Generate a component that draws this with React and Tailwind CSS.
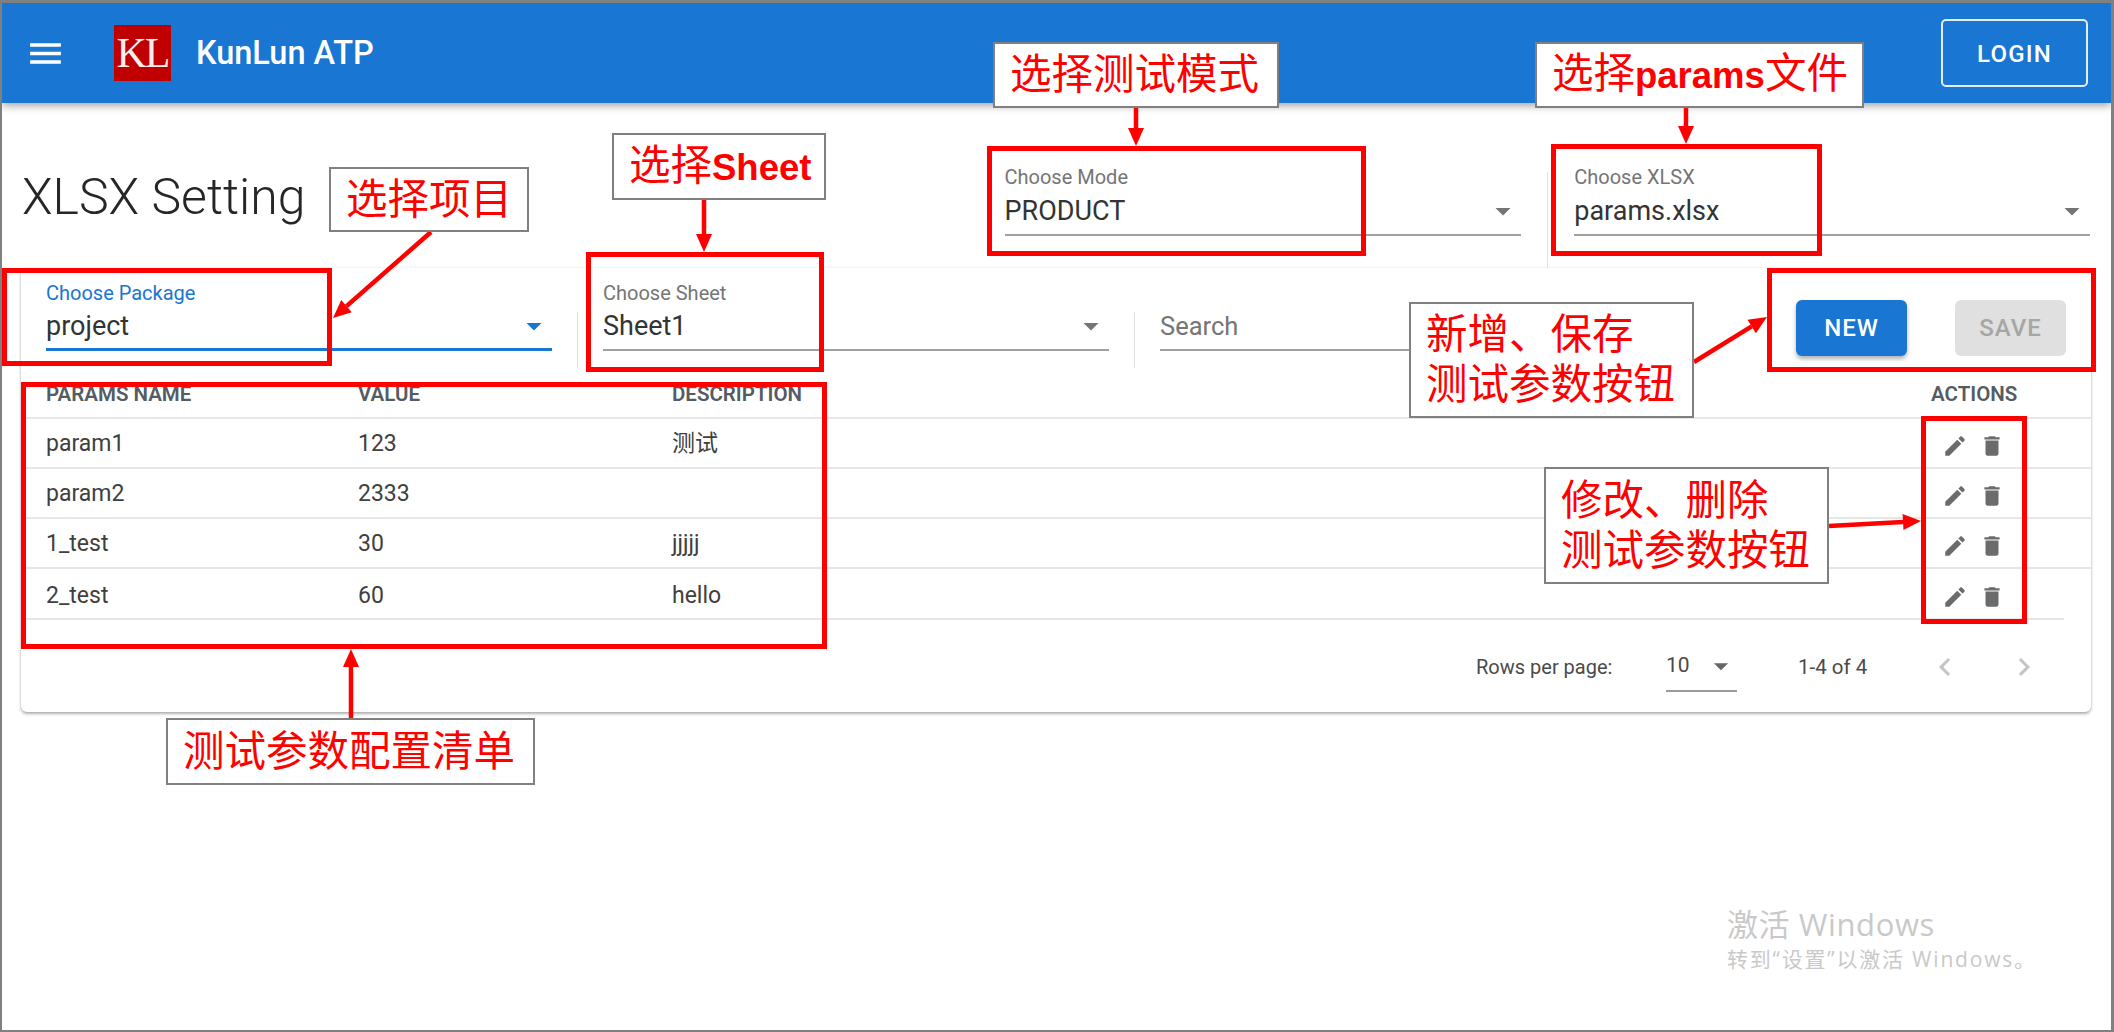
import React from "react";

const sans = "font-['Roboto','Noto_Sans_CJK_SC',sans-serif]";

const Icon = ({ d, className }) => (
  <svg viewBox="0 0 24 24" fill="currentColor" className={className}>
    <path d={d} />
  </svg>
);

const MENU = "M3 18h18v-2H3v2zm0-5h18v-2H3v2zm0-7v2h18V6H3z";
const DROP = "M7 10l5 5 5-5z";
const EDIT =
  "M3 17.25V21h3.75L17.81 9.94l-3.75-3.75L3 17.25zM20.71 7.04c.39-.39.39-1.02 0-1.41l-2.34-2.34c-.39-.39-1.02-.39-1.41 0l-1.83 1.83 3.75 3.75 1.83-1.83z";
const TRASH =
  "M6 19c0 1.1.9 2 2 2h8c1.1 0 2-.9 2-2V7H6v12zM19 4h-3.5l-1-1h-5l-1 1H5v2h14V4z";
const LEFT = "M15.41 7.41 14 6l-6 6 6 6 1.41-1.41L10.83 12z";
const RIGHT = "M10 6 8.59 7.41 13.17 12l-4.58 4.58L10 18l6-6z";

function Select({ label, value, focused, raised, className }) {
  return (
    <div className={className}>
      <div
        className={`text-[20px] leading-[20px] ${raised ? "-mt-[2px]" : ""} ${
          focused ? "text-[#1976d2]" : "text-[#757575]"
        }`}
      >
        {label}
      </div>
      <div
        className={`flex h-[40px] items-center justify-between pb-[8px] ${raised ? "mt-[9px]" : "mt-[8px]"} ${
          focused ? "border-b-[3px] border-[#1976d2]" : "border-b-2 border-[#a0a0a0]"
        }`}
      >
        <span className="text-[27px] leading-[30px] text-[#333333]">{value}</span>
        <Icon d={DROP} className={`h-[36px] w-[36px] ${focused ? "text-[#1976d2]" : "text-[#757575]"}`} />
      </div>
    </div>
  );
}

const rows = [
  { name: "param1", value: "123", desc: "测试" },
  { name: "param2", value: "2333", desc: "" },
  { name: "1_test", value: "30", desc: "jjjjj" },
  { name: "2_test", value: "60", desc: "hello" },
];

function TableRow({ row, last }) {
  return (
    <div
      className={`flex items-center border-b-2 border-[#e6e6e6] pl-[25px] text-[23px] text-[#404040] ${
        last ? "mr-[27px] h-[51px] pt-[5px]" : "h-[50px] pt-[2px]"
      }`}
    >
      <span className="w-[312px]">{row.name}</span>
      <span className="w-[314px]">{row.value}</span>
      <span className="w-[1259px]">{row.desc}</span>
      <span className={`flex items-center gap-[11px] pl-[11px] ${last ? "pt-[1px]" : "pt-[3px]"}`}>
        <Icon d={EDIT} className="h-[26px] w-[26px] text-[#6b6b6b]" />
        <Icon d={TRASH} className="h-[26px] w-[26px] text-[#6b6b6b]" />
      </span>
    </div>
  );
}

// red callouts drawn on top of the screenshot
function Note({ className, children }) {
  return (
    <div
      className={`absolute flex flex-col justify-center border-2 border-[#808080] bg-white pl-[15px] font-['Liberation_Sans','Noto_Sans_CJK_SC',sans-serif] text-[41.5px] leading-[50px] whitespace-nowrap text-[#ff0000] ${className}`}
    >
      {children}
    </div>
  );
}

const Frame = ({ className }) => (
  <div className={`absolute border-[5px] border-[#ff0000] ${className}`} />
);

function Arrow({ x1, y1, x2, y2 }) {
  const a = Math.atan2(y2 - y1, x2 - x1);
  const len = 18;
  const w = 8;
  const bx = x2 - len * Math.cos(a);
  const by = y2 - len * Math.sin(a);
  const px = -Math.sin(a) * w;
  const py = Math.cos(a) * w;
  return (
    <g>
      <line x1={x1} y1={y1} x2={bx} y2={by} stroke="#ff0000" strokeWidth="4.5" />
      <polygon points={`${x2},${y2} ${bx + px},${by + py} ${bx - px},${by - py}`} fill="#ff0000" />
    </g>
  );
}

export default function App() {
  return (
    <div className={`relative h-[1032px] w-[2114px] overflow-hidden border-t-[3px] border-r-[3px] border-b-2 border-l-2 border-[#808080] bg-white ${sans}`}>
      {/* App bar */}
      <header className="relative z-10 flex h-[100px] items-center bg-[#1976d2] pr-[23px] text-white shadow-[0_3px_8px_rgba(0,0,0,0.35)]">
        <Icon d={MENU} className="ml-[23px] h-[41px] w-[41px]" />
        <div className="ml-[48px] flex h-[56px] w-[57px] items-center justify-center bg-[#c00000] font-['Liberation_Serif',serif] text-[42px] tracking-[-2px] text-[#fbeeee]">
          KL
        </div>
        <div className="ml-[25px] text-[32.5px] font-medium">KunLun ATP</div>
        <button className="ml-auto h-[68px] w-[147px] rounded-[5px] border-2 border-[#e3eefa] pt-[2px] text-[24px] font-medium tracking-[1.2px]">
          LOGIN
        </button>
      </header>

      {/* Title row with file selects */}
      <div className="flex h-[165px] pr-[21px] pl-[20px]">
        <h1 className="w-[983px] pt-[59px] text-[50px] leading-[70px] font-light text-[#262626]">XLSX Setting</h1>
        <Select label="Choose Mode" value="PRODUCT" raised className="w-[517px] pt-[66px]" />
        <div className="mx-[26px] mt-[69px] h-[96px] w-px bg-[#e2e2e2]" />
        <Select label="Choose XLSX" value="params.xlsx" raised className="w-[516px] pt-[66px]" />
      </div>

      {/* Params card */}
      <div className="mr-[20px] ml-[19px] h-[444px] rounded-[6px] bg-white shadow-[0_2px_3px_rgba(0,0,0,0.3),0_0_3px_rgba(0,0,0,0.08)]">
        <div className="flex h-[101px] pr-[25px] pl-[25px]">
          <Select label="Choose Package" value="project" focused className="w-[506px] pt-[15px]" />
          <div className="mx-[25px] mt-[44px] h-[56px] w-px bg-[#e2e2e2]" />
          <Select label="Choose Sheet" value="Sheet1" className="w-[506px] pt-[15px]" />
          <div className="mx-[25px] mt-[44px] h-[56px] w-px bg-[#e2e2e2]" />
          <div className="mt-[43px] flex h-[40px] w-[506px] items-center border-b-2 border-[#a0a0a0] pb-[8px] text-[25.5px] text-[#757575]">
            Search
          </div>
          <div className="ml-auto flex items-start gap-[48px] pt-[32px]">
            <button className="h-[56px] w-[111px] rounded-[6px] bg-[#1976d2] text-[24px] font-medium tracking-[1px] text-white shadow-[0_3px_4px_rgba(0,0,0,0.3)]">
              NEW
            </button>
            <button className="h-[56px] w-[111px] rounded-[6px] bg-[#e0e0e0] text-[24px] font-medium tracking-[1px] text-[#a6a6a6]">
              SAVE
            </button>
          </div>
        </div>

        <div className="flex h-[50px] items-center border-b-2 border-[#e6e6e6] pt-[2px] pl-[25px] text-[20.5px] font-semibold text-[#555b63]">
          <span className="w-[312px]">PARAMS NAME</span>
          <span className="w-[314px]">VALUE</span>
          <span className="w-[1259px]">DESCRIPTION</span>
          <span>ACTIONS</span>
        </div>
        {rows.map((row, i) => (
          <TableRow key={row.name} row={row} last={i === rows.length - 1} />
        ))}

        {/* Pagination */}
        <div className="flex h-[92px] items-center pt-[2px] pl-[1455px] text-[20px] text-[#4a4a4a]">
          <span className="w-[190px]">Rows per page:</span>
          <div className="flex h-[50px] w-[71px] items-center justify-between border-b-2 border-[#9a9a9a]">
            <span className="text-[21px]">10</span>
            <Icon d={DROP} className="mr-[-1px] h-[34px] w-[34px] text-[#666666]" />
          </div>
          <span className="ml-[61px] w-[129px] text-[20.5px]">1-4 of 4</span>
          <Icon d={LEFT} className="h-[36px] w-[36px] text-[#c4c4c4]" />
          <Icon d={RIGHT} className="ml-[43px] h-[36px] w-[36px] text-[#c4c4c4]" />
        </div>
      </div>

      {/* Windows activation watermark */}
      <div className="absolute top-[901px] left-[1725px] font-['Open_Sans','Noto_Sans_CJK_SC',sans-serif] text-[#c9c9c9]">
        <div className="text-[31px] leading-[40px] tracking-[0.6px]">激活 Windows</div>
        <div className="text-[21px] leading-[30px] tracking-[1.8px]">转到“设置”以激活 Windows。</div>
      </div>

      {/* Annotation layer */}
      <div className="absolute top-[-3px] left-[-2px] z-20 h-[1032px] w-[2114px]">
        <svg className="absolute inset-0 h-full w-full" viewBox="0 0 2114 1032">
          <Arrow x1={431} y1={232} x2={333} y2={318} />
          <Arrow x1={704} y1={200} x2={704} y2={252} />
          <Arrow x1={1136} y1={108} x2={1136} y2={146} />
          <Arrow x1={1686} y1={108} x2={1686} y2={144} />
          <Arrow x1={1694} y1={362} x2={1767} y2={317} />
          <Arrow x1={1829} y1={526} x2={1921} y2={521} />
          <Arrow x1={351} y1={718} x2={351} y2={649} />
        </svg>
        <Frame className="top-[268px] left-[2px] h-[98px] w-[330px]" />
        <Frame className="top-[252px] left-[586px] h-[120px] w-[238px]" />
        <Frame className="top-[146px] left-[987px] h-[110px] w-[379px]" />
        <Frame className="top-[144px] left-[1551px] h-[112px] w-[271px]" />
        <Frame className="top-[268px] left-[1767px] h-[104px] w-[329px]" />
        <Frame className="top-[382px] left-[21px] h-[267px] w-[806px]" />
        <Frame className="top-[416px] left-[1921px] h-[208px] w-[106px]" />

        <Note className="top-[167px] left-[329px] h-[65px] w-[200px]">选择项目</Note>
        <Note className="top-[133px] left-[612px] h-[67px] w-[214px]">
          <span>选择<b className="text-[36.5px]">Sheet</b></span>
        </Note>
        <Note className="top-[42px] left-[993px] h-[66px] w-[286px]">选择测试模式</Note>
        <Note className="top-[42px] left-[1535px] h-[66px] w-[329px]">
          <span>选择<b className="text-[36.5px]">params</b>文件</span>
        </Note>
        <Note className="top-[302px] left-[1409px] h-[116px] w-[285px]">
          <span>新增、保存</span>
          <span>测试参数按钮</span>
        </Note>
        <Note className="top-[467px] left-[1544px] h-[117px] w-[285px]">
          <span>修改、删除</span>
          <span>测试参数按钮</span>
        </Note>
        <Note className="top-[718px] left-[166px] h-[67px] w-[369px]">测试参数配置清单</Note>
      </div>
    </div>
  );
}
